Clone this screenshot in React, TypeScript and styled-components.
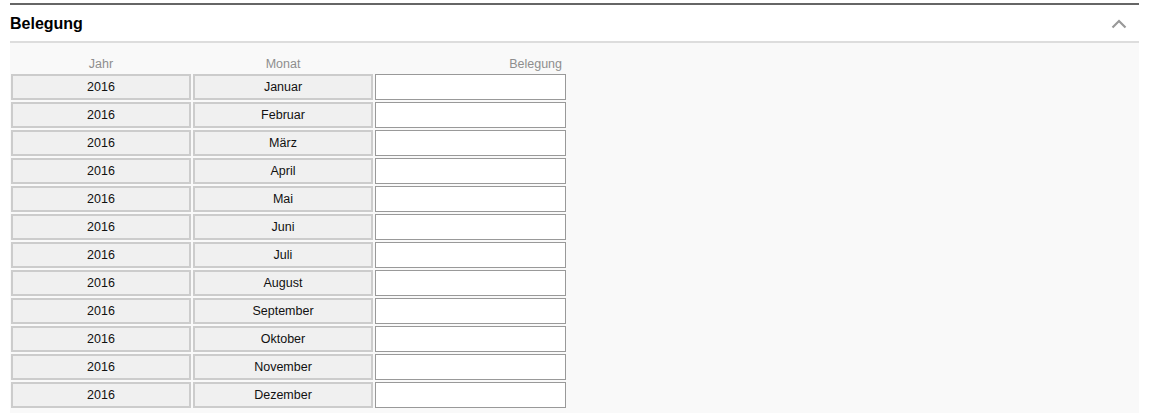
import React from 'react';
import styled, { createGlobalStyle } from 'styled-components';

const GlobalStyle = createGlobalStyle`
  body {
    margin: 0;
    background: #fff;
    font-family: "Liberation Sans", Arial, sans-serif;
  }
`;

const months = [
    'Januar', 'Februar', 'März', 'April', 'Mai', 'Juni',
    'Juli', 'August', 'September', 'Oktober', 'November', 'Dezember',
];

const Page = styled.div`
  padding: 3px 15px 0 10px;
`;

const Panel = styled.section`
  width: 1129px;
  border-top: 2px solid #666;
`;

const Header = styled.div`
  height: 36px;
  display: flex;
  align-items: center;
  justify-content: space-between;
  border-bottom: 2px solid #ddd;
  padding-right: 12px;
`;

const Title = styled.h2`
  margin: 0;
  padding-top: 2px;
  font-size: 16px;
  font-weight: bold;
  color: #000;
`;

const Toggle = styled.svg`
  display: block;
  margin-top: 1px;
`;

const Body = styled.div`
  background: #f9f9f9;
  padding: 14px 0 10px 1px;
`;

const Grid = styled.div`
  display: grid;
  grid-template-columns: 180px 180px 191px;
  grid-auto-rows: 26px;
  grid-template-rows: 15px;
  column-gap: 2px;
  row-gap: 2px;
`;

const Label = styled.div<{ $align?: string }>`
  font-size: 12.5px;
  line-height: 15px;
  color: #8e8e8e;
  text-align: ${p => p.$align || 'center'};
  padding: 0 4px;
`;

const Cell = styled.div`
  box-sizing: border-box;
  border: 2px solid #ccc;
  background: #f0f0f0;
  font-size: 12.5px;
  color: #111;
  display: flex;
  align-items: center;
  justify-content: center;
`;

const Input = styled.input`
  box-sizing: border-box;
  width: 100%;
  height: 100%;
  margin: 0;
  border: 1px solid #999;
  background: #fff;
  font-family: inherit;
  font-size: 12px;
  padding: 0 4px;
  outline: none;
`;

export default function App() {
    return (
        <Page>
            <GlobalStyle/>
            <Panel>
                <Header>
                    <Title>Belegung</Title>
                    <Toggle width="16" height="10" viewBox="0 0 16 10">
                        <polyline points="1.5,8.5 8,2 14.5,8.5" fill="none" stroke="#999" strokeWidth="2.2"/>
                    </Toggle>
                </Header>
                <Body>
                    <Grid>
                        <Label>Jahr</Label>
                        <Label>Monat</Label>
                        <Label $align="right">Belegung</Label>
                        {months.map(m => (
                            <React.Fragment key={m}>
                                <Cell>2016</Cell>
                                <Cell>{m}</Cell>
                                <Input type="text"/>
                            </React.Fragment>
                        ))}
                    </Grid>
                </Body>
            </Panel>
        </Page>
    );
}
